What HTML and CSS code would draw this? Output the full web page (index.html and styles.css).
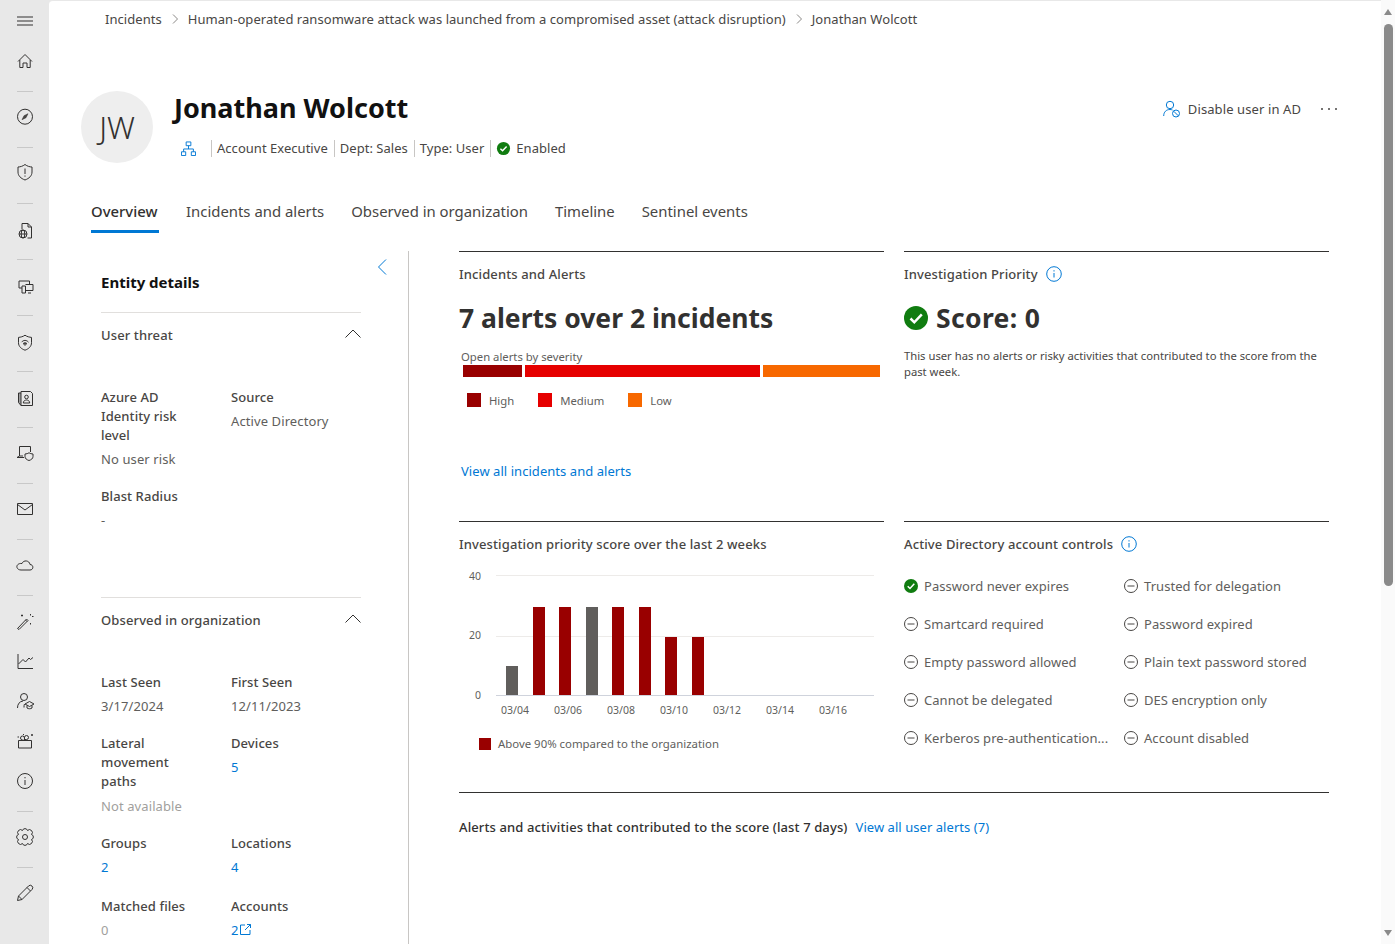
FILE: index.html
```html
<!DOCTYPE html>
<html lang="en">
<head>
<meta charset="utf-8">
<title>Jonathan Wolcott</title>
<link rel="stylesheet" href="styles.css">
</head>
<body>
<div class="app">
  <nav class="nav">
    <div class="nav-item nav-menu"><svg class="ico" viewBox="0 0 20 20"><path d="M2 6h16M2 10h16M2 14h16"/></svg></div>
    <div class="nav-item"><svg class="ico" viewBox="0 0 20 20"><path d="M3 10.500 10 3.500l7 7M4.800 9v7.500H8V12h4v4.500h3.200V9"/></svg></div>
    <div class="nav-rule"></div>
    <div class="nav-item"><svg class="ico" viewBox="0 .3 20 20"><circle cx="10" cy="10" r="7.500"/><path class="fill-dark" d="M13 7 11 11l-4 2 2-4z"/></svg></div>
    <div class="nav-rule"></div>
    <div class="nav-item"><svg class="ico" viewBox="0 1 20 20"><path d="M10 2.500c2.300 1.800 4.700 2.400 7 2.500v5c0 3.800-2.800 6.400-7 8-4.200-1.600-7-4.200-7-8V5c2.300-.1 4.700-.7 7-2.500zM10 6.500V12M10 13.500v1.200"/></svg></div>
    <div class="nav-rule"></div>
    <div class="nav-item"><svg class="ico" viewBox="0 -1.500 20 20"><path d="M7 9V3h6l3.500 3.500v11H12.500M13 3v3.500h3.500"/><circle cx="8" cy="13.500" r="4"/><ellipse cx="8" cy="13.500" rx="1.800" ry="4"/><path d="M4 13.500h8"/></svg></div>
    <div class="nav-rule"></div>
    <div class="nav-item"><svg class="ico" viewBox="0 -1.500 20 20"><path d="M7 11.500H4V4.500h10.500V8M10.500 8H18v6h-7.500M7 9.500h3.500v7H7zM13 16.500h3"/></svg></div>
    <div class="nav-rule"></div>
    <div class="nav-item"><svg class="ico" viewBox="0 -1.700 20 20"><path d="M10 2.500c2 1.500 4.500 2 6.500 2.200v5.300c0 3.700-2.800 6.200-6.500 7.500-3.700-1.300-6.500-3.800-6.500-7.500V4.700c2-.2 4.500-.7 6.500-2.200z"/><path d="M6.500 9.500c2-2.400 5-2.400 7 0M8 11c1.200-1.200 2.800-1.200 4 0"/><circle cx="10" cy="11.500" r="1"/></svg></div>
    <div class="nav-rule"></div>
    <div class="nav-item"><svg class="ico" viewBox="0 -1 20 20"><path class="fill-grey" d="M3.500 5H7v12.500H6l-2.500-3z"/><path class="fill-nav" d="M6 3.500h9.500l2 2v12H6z"/><circle cx="11.500" cy="9" r="1.800"/><path d="M8.300 15c0-4 6.400-4 6.400 0z"/></svg></div>
    <div class="nav-rule"></div>
    <div class="nav-item"><svg class="ico" viewBox="0 0 20 20"><path d="M4.500 13V3.500h11v5.500M2 14.500h7M2 14.500l2.500-1.500H8"/><path class="fill-nav" d="M10 11c1.500 0 3-.5 4-1.200 1 .7 2.500 1.200 4 1.200v2.500c0 2-1.700 3.300-4 4-2.300-.7-4-2-4-4z"/></svg></div>
    <div class="nav-rule"></div>
    <div class="nav-item"><svg class="ico" viewBox="0 0 20 20"><path d="M2.500 4.500h15v11h-15zM2.500 5.500 10 11l7.500-5.500"/></svg></div>
    <div class="nav-rule"></div>
    <div class="nav-item"><svg class="ico" viewBox="0 .5 20 20"><path d="M6 15.500h9c3.800 0 3.800-5.500 0-5.500-.6-4.300-6.600-4.800-8-1-3.700-.5-5.700 2-5 4 .5 1.500 2 2.500 4 2.500z"/></svg></div>
    <div class="nav-rule"></div>
    <div class="nav-item"><svg class="ico" viewBox="0 0 20 20"><path d="M2.500 17.500 11.500 8l1.500 1.500-9 9zM10.500 9l1.500 1.500M15.500 3v1.500M17 5.500h1.500M7 3.500v2M6 4.500h2M15.500 12v1.500"/></svg></div>
    <div class="nav-item"><svg class="ico" viewBox="0 0 20 20"><path d="M3 3v14.500h15M3.500 13 8 8.500l2.500 2.500 3.500-4 1.500 1.500L18 6.500"/></svg></div>
    <div class="nav-item"><svg class="ico" viewBox="0 0 20 20"><circle cx="9" cy="6" r="3.500"/><path d="M2.500 17c0-4 2-6.500 5.500-7M9 16.500c0-1.500 0-2.500.5-3.500M14.500 10.500 19 13l-4.500 2.500L10 13zM12 14.500V17c1.500 1 3.500 1 5 0v-2.500"/></svg></div>
    <div class="nav-item"><svg class="ico" viewBox="0 0 20 20"><path d="M3.500 9.500h13V17h-13zM2.500 6h1.500M8 3.500h1M17 3v2M16 4h2"/><path d="M9.500 9.500V6.500a2 2 0 1 1 2 2h-2M9.500 9.500V7a2 2 0 1 0-2 2z"/></svg></div>
    <div class="nav-item"><svg class="ico" viewBox="0 0 20 20"><circle cx="10" cy="10" r="7.500"/><path d="M10 9v5M10 6v1.300"/></svg></div>
    <div class="nav-rule"></div>
    <div class="nav-item"><svg class="ico" viewBox="0 0 20 20"><path d="M16.500 7.500A2.600 2.600 0 0 1 16.500 12.500 2.600 2.600 0 0 1 12.500 16.500 2.600 2.600 0 0 1 7.500 16.500 2.600 2.600 0 0 1 3.500 12.500 2.600 2.600 0 0 1 3.500 7.500 2.600 2.600 0 0 1 7.500 3.500 2.600 2.600 0 0 1 12.500 3.500 2.600 2.600 0 0 1 16.500 7.500z"/><circle cx="10" cy="10" r="2.500"/></svg></div>
    <div class="nav-rule"></div>
    <div class="nav-item"><svg class="ico" viewBox="0 0 20 20"><path d="M2.500 17.500 3.500 13 13.500 3a1.800 1.800 0 0 1 3.500 3.500L7 16.500zM3.500 13l3.500 3.500M12 4.500 15.500 8"/></svg></div>
  </nav>

  <main class="main">
    <div class="crumbs">
      <span>Incidents</span>
      <svg class="crumb-sep" viewBox="0 0 10 12"><path d="M3 1.500 7.500 6 3 10.500"/></svg>
      <span>Human-operated ransomware attack was launched from a compromised asset (attack disruption)</span>
      <svg class="crumb-sep" viewBox="0 0 10 12"><path d="M3 1.500 7.500 6 3 10.500"/></svg>
      <span>Jonathan Wolcott</span>
    </div>

    <header class="head">
      <div class="avatar">JW</div>
      <div class="head-info">
        <h1 class="title">Jonathan Wolcott</h1>
        <div class="meta">
          <svg class="org" viewBox="0 0 16 16"><path d="M5.500 1h5v4h-5zM.5 11.500h4.500v4H.5zM11 11.500h4.500v4H11zM8 5v3.500M2.800 11.500v-3h10.400v3"/></svg>
          <span class="meta-item">Account Executive</span>
          <span class="meta-item">Dept: Sales</span>
          <span class="meta-item">Type: User</span>
          <span class="meta-item meta-status">
            <svg class="check" viewBox="0 0 16 16"><circle cx="8" cy="8" r="7"/><path d="M4.700 8.300 7 10.500l4.300-4.700"/></svg>
            Enabled
          </span>
        </div>
      </div>
      <div class="actions">
        <svg class="act-ico" viewBox="0 0 18 18"><circle cx="7" cy="5" r="3.700"/><path d="M.7 16c0-4 2.500-6.500 6.300-6.500 1 0 1.700.2 2.500.5"/><circle cx="13" cy="13.500" r="3.500"/><path d="M10.700 11.200l4.600 4.600"/></svg>
        <span>Disable user in AD</span>
        <span class="dots"><i></i><i></i><i></i></span>
      </div>
    </header>

    <div class="tabs">
      <span class="tab tab-on">Overview</span>
      <span class="tab">Incidents and alerts</span>
      <span class="tab">Observed in organization</span>
      <span class="tab">Timeline</span>
      <span class="tab">Sentinel events</span>
    </div>

    <div class="body">
      <aside class="panel">
        <svg class="collapse" viewBox="0 0 10 16"><path d="M9 .5 1.500 8 9 15.500"/></svg>
        <h2 class="panel-title">Entity details</h2>
        <div class="acc">
          <span>User threat</span>
          <svg class="chev" viewBox="0 0 16 9"><path d="M.5 8.500 8 1l7.500 7.500"/></svg>
        </div>
        <div class="fields fields-threat">
          <div class="field"><div class="label">Azure AD Identity risk level</div><div class="value">No user risk</div></div>
          <div class="field"><div class="label">Source</div><div class="value">Active Directory</div></div>
          <div class="field"><div class="label">Blast Radius</div><div class="value">-</div></div>
        </div>
        <div class="acc">
          <span>Observed in organization</span>
          <svg class="chev" viewBox="0 0 16 9"><path d="M.5 8.500 8 1l7.500 7.500"/></svg>
        </div>
        <div class="fields">
          <div class="field"><div class="label">Last Seen</div><div class="value">3/17/2024</div></div>
          <div class="field"><div class="label">First Seen</div><div class="value">12/11/2023</div></div>
          <div class="field"><div class="label">Lateral movement paths</div><div class="value value-low muted">Not available</div></div>
          <div class="field"><div class="label">Devices</div><div class="value link">5</div></div>
          <div class="field field-tall"><div class="label">Groups</div><div class="value link">2</div></div>
          <div class="field field-tall"><div class="label">Locations</div><div class="value link">4</div></div>
          <div class="field"><div class="label">Matched files</div><div class="value muted">0</div></div>
          <div class="field"><div class="label">Accounts</div><div class="value link">2<svg class="ext" viewBox="0 0 11 11"><path d="M5 1H.5v9.500H10V6M5 6l5.500-5.500M7 .5h3.500V4"/></svg></div></div>
        </div>
      </aside>

      <section class="content">
        <div class="cards">
          <div class="card">
            <h3 class="card-title">Incidents and Alerts</h3>
            <div class="headline">7 alerts over 2 incidents</div>
            <div class="bar-caption">Open alerts by severity</div>
            <div class="sev-bar"><span class="sev sev-high"></span><span class="sev sev-med"></span><span class="sev sev-low"></span></div>
            <div class="sev-legend">
              <span class="leg"><i class="swatch bg-high"></i>High</span>
              <span class="leg"><i class="swatch bg-med"></i>Medium</span>
              <span class="leg"><i class="swatch bg-low"></i>Low</span>
            </div>
            <a class="view-link">View all incidents and alerts</a>
          </div>

          <div class="card">
            <h3 class="card-title">Investigation Priority <svg class="info" viewBox="0 0 16 16"><circle cx="8" cy="8" r="7.300"/><path d="M8 7v4.500M8 4.200v1.300"/></svg></h3>
            <div class="headline score">
              <svg class="score-ico" viewBox="0 0 24 24"><circle cx="12" cy="12" r="12"/><path d="M6.500 12.500l3.800 3.800 7.500-8"/></svg>
              Score: 0
            </div>
            <p class="score-text">This user has no alerts or risky activities that contributed to the score from the past week.</p>
          </div>

          <div class="card">
            <h3 class="card-title">Investigation priority score over the last 2 weeks</h3>
            <svg class="chart" viewBox="0 0 425 160">
              <g class="grid-lines"><path d="M37 10.500h378M37 71.500h378"/></g>
              <path class="base-line" d="M37 130.500h378"/>
              <g class="axis">
                <text x="22" y="15" text-anchor="end">40</text>
                <text x="22" y="74" text-anchor="end">20</text>
                <text x="22" y="134" text-anchor="end">0</text>
                <text x="56" y="149" text-anchor="middle">03/04</text>
                <text x="109" y="149" text-anchor="middle">03/06</text>
                <text x="162" y="149" text-anchor="middle">03/08</text>
                <text x="215" y="149" text-anchor="middle">03/10</text>
                <text x="268" y="149" text-anchor="middle">03/12</text>
                <text x="321" y="149" text-anchor="middle">03/14</text>
                <text x="374" y="149" text-anchor="middle">03/16</text>
              </g>
              <rect class="b-grey" x="47" y="101" width="12" height="29"/>
              <rect class="b-red" x="74" y="42" width="12" height="88"/>
              <rect class="b-red" x="100" y="42" width="12" height="88"/>
              <rect class="b-grey" x="127" y="42" width="12" height="88"/>
              <rect class="b-red" x="153" y="42" width="12" height="88"/>
              <rect class="b-red" x="180" y="42" width="12" height="88"/>
              <rect class="b-red" x="206" y="72" width="12" height="58"/>
              <rect class="b-red" x="233" y="72" width="12" height="58"/>
            </svg>
            <div class="chart-legend"><i class="chart-swatch"></i>Above 90% compared to the organization</div>
          </div>

          <div class="card">
            <h3 class="card-title">Active Directory account controls <svg class="info" viewBox="0 0 16 16"><circle cx="8" cy="8" r="7.300"/><path d="M8 7v4.500M8 4.200v1.300"/></svg></h3>
            <ul class="controls">
              <li class="ctl"><svg class="ctl-ico on" viewBox="0 0 14 14"><circle cx="7" cy="7" r="7"/><path d="M3.700 7.300 6 9.500l4.300-4.700"/></svg><span>Password never expires</span></li>
              <li class="ctl"><svg class="ctl-ico" viewBox="0 0 14 14"><circle cx="7" cy="7" r="6.500"/><path d="M3.500 7h7"/></svg><span>Trusted for delegation</span></li>
              <li class="ctl"><svg class="ctl-ico" viewBox="0 0 14 14"><circle cx="7" cy="7" r="6.500"/><path d="M3.500 7h7"/></svg><span>Smartcard required</span></li>
              <li class="ctl"><svg class="ctl-ico" viewBox="0 0 14 14"><circle cx="7" cy="7" r="6.500"/><path d="M3.500 7h7"/></svg><span>Password expired</span></li>
              <li class="ctl"><svg class="ctl-ico" viewBox="0 0 14 14"><circle cx="7" cy="7" r="6.500"/><path d="M3.500 7h7"/></svg><span>Empty password allowed</span></li>
              <li class="ctl"><svg class="ctl-ico" viewBox="0 0 14 14"><circle cx="7" cy="7" r="6.500"/><path d="M3.500 7h7"/></svg><span>Plain text password stored</span></li>
              <li class="ctl"><svg class="ctl-ico" viewBox="0 0 14 14"><circle cx="7" cy="7" r="6.500"/><path d="M3.500 7h7"/></svg><span>Cannot be delegated</span></li>
              <li class="ctl"><svg class="ctl-ico" viewBox="0 0 14 14"><circle cx="7" cy="7" r="6.500"/><path d="M3.500 7h7"/></svg><span>DES encryption only</span></li>
              <li class="ctl"><svg class="ctl-ico" viewBox="0 0 14 14"><circle cx="7" cy="7" r="6.500"/><path d="M3.500 7h7"/></svg><span>Kerberos pre-authentication...</span></li>
              <li class="ctl"><svg class="ctl-ico" viewBox="0 0 14 14"><circle cx="7" cy="7" r="6.500"/><path d="M3.500 7h7"/></svg><span>Account disabled</span></li>
            </ul>
          </div>
        </div>
        <div class="contrib">
          <h3 class="card-title contrib-title">Alerts and activities that contributed to the score (last 7 days)</h3>
          <a class="view-link contrib-link">View all user alerts (7)</a>
        </div>
      </section>
    </div>
  </main>

  <div class="scroll">
    <i class="arrow-up"></i>
    <div class="thumb"></div>
    <i class="arrow-down"></i>
  </div>
</div>
</body>
</html>
```

FILE: styles.css
```css
* { box-sizing: border-box; }
html, body { margin: 0; height: 100%; overflow: hidden; }
body {
  font-family: "Noto Sans", "Open Sans", "Liberation Sans", sans-serif;
  font-size: 13px;
  color: #323130;
  background: #e8e8e8;
}
h1, h2, h3, p, ul { margin: 0; padding: 0; }
.app { display: flex; height: 944px; width: 1395px; }

/* left rail */
.nav {
  width: 49px;
  flex: none;
  display: flex;
  flex-direction: column;
  align-items: center;
  background: #e8e8e8;
  border-bottom-left-radius: 6px;
}
.nav-item { height: 40px; width: 49px; flex: none; display: flex; align-items: center; justify-content: center; }
.nav-menu { height: 41px; }
.nav-rule { width: 16px; height: 1px; background: #c8c8c8; margin: 10px 0 5px; flex: none; }
.ico { width: 20px; height: 20px; fill: none; stroke: #323130; stroke-width: 1; }
.fill-grey { fill: #a0a0a0; }
.fill-nav { fill: #e8e8e8; }
.fill-dark { fill: #484644; stroke-width: .5; }

/* main */
.main {
  flex: 1;
  min-width: 0;
  background: #fff;
  border-top: 1px solid #e8e8e8;
  border-top-left-radius: 4px;
  overflow: hidden;
}
.crumbs { height: 36px; margin-left: 56px; display: flex; align-items: center; gap: 8px; font-size: 13px; letter-spacing: .05px; color: #484644; }
.crumb-sep { width: 10px; height: 12px; fill: none; stroke: #8a8886; stroke-width: 1; }

.head { display: flex; margin: 54px 44px 0 32px; height: 72px; }
.avatar {
  width: 72px; height: 72px; border-radius: 50%; flex: none;
  background: #eeeeee; color: #323130;
  display: flex; align-items: center; justify-content: center;
  font-size: 31px; font-weight: 300;
}
.head-info { margin-left: 20px; }
.title { font-size: 27px; line-height: 34px; font-weight: 700; color: #111; margin-left: 1px; }
.meta { display: flex; align-items: center; height: 20px; margin-top: 13px; color: #484644; font-size: 13px; letter-spacing: .03px; }
.org { width: 15px; height: 15px; margin: 0 15px 0 8px; fill: none; stroke: #0078d4; stroke-width: 1; }
.meta-item { border-left: 1px solid #c8c6c4; padding: 0 5px; margin-right: 1px; line-height: 17px; }
.meta-status { display: flex; align-items: center; gap: 5px; }
.check { width: 15px; height: 15px; }
.check circle, .ctl-ico.on circle { fill: #107c10; stroke: none; }
.check path, .ctl-ico.on path { fill: none; stroke: #fff; stroke-width: 1.5; }
.actions { margin-left: auto; display: flex; align-items: center; height: 36px; color: #484644; letter-spacing: .1px; }
.act-ico { width: 18px; height: 18px; margin-right: 7px; fill: none; stroke: #0078d4; stroke-width: 1; }
.dots { display: flex; gap: 5px; margin: 0 0 1px 20px; width: 16px; }
.dots i { width: 2px; height: 2px; background: #484644; border-radius: 50%; flex: none; }

.tabs { display: flex; gap: 27px; margin: 27px 0 0 42px; height: 43px; font-size: 14.900px; color: #484644; }
.tab { padding-top: 9px; line-height: 24px; }
.tab-on { width: 68px; border-bottom: 3px solid #0078d4; font-weight: 500; color: #323130; white-space: nowrap; }

.body { display: flex; margin-top: 18px; }

/* left panel */
.panel { position: relative; width: 308px; margin-left: 52px; height: 700px; padding-right: 47px; border-right: 1px solid #c8c6c4; flex: none; }
.collapse { position: absolute; left: 276px; top: 8px; width: 10px; height: 16px; fill: none; stroke: #0078d4; stroke-width: 1; }
.panel-title { font-size: 15px; line-height: 20px; font-weight: 700; color: #111; padding-top: 21px; height: 61px; }
.acc {
  height: 45px; border-top: 1px solid #e1dfdd; display: flex; align-items: center; justify-content: space-between;
  font-weight: 500; letter-spacing: .12px; color: #484644;
}
.chev { width: 16px; height: 9px; fill: none; stroke: #323130; stroke-width: 1; margin-bottom: 3px; }
.fields { display: grid; grid-template-columns: 130px 130px; row-gap: 18px; margin-top: 31px; align-items: start; }
.fields-threat { height: 209px; align-content: start; }
.field { padding-right: 30px; }
.field-tall { padding-bottom: 2px; }
.label { line-height: 19px; font-weight: 500; letter-spacing: .08px; color: #484644; }
.value { line-height: 19px; margin-top: 5px; letter-spacing: .1px; color: #605e5c; white-space: nowrap; }
.value-low { margin-top: 6px; }
.muted { color: #a19f9d; }
.link { color: #0078d4; }
.ext { width: 11px; height: 11px; margin-left: 1px; fill: none; stroke: #0078d4; stroke-width: 1; }

/* content */
.content { margin-left: 50px; width: 870px; flex: none; }
.cards { display: grid; grid-template-columns: 425px 425px; column-gap: 20px; grid-template-rows: 270px 271px; }
.card { border-top: 1px solid #323130; padding-top: 12px; }
.card-title { font-size: 13px; line-height: 20px; font-weight: 500; letter-spacing: .12px; color: #484644; display: flex; align-items: center; gap: 8px; }
.headline { font-size: 26.500px; line-height: 36px; font-weight: 700; color: #323130; margin-top: 16px; }
.score { display: flex; align-items: center; gap: 8px; letter-spacing: .35px; }
.score-ico { width: 24px; height: 24px; flex: none; }
.score-ico circle { fill: #107c10; }
.score-ico path { fill: none; stroke: #fff; stroke-width: 2.500; }
.score-text { font-size: 11.250px; line-height: 16px; margin-top: 12px; color: #484644; }
.bar-caption { font-size: 11.300px; line-height: 16px; margin: 13px 0 0 2px; color: #605e5c; }
.sev-bar { display: flex; gap: 3px; height: 12px; margin-left: 4px; width: 417px; }
.sev-high { width: 59px; background: #990000; }
.sev-med { width: 235px; background: #e60000; }
.sev-low { width: 117px; background: #f76800; }
.sev-legend { display: flex; margin: 16px 0 0 8px; height: 14px; font-size: 11.300px; color: #605e5c; }
.leg { display: flex; align-items: center; gap: 8px; margin-right: 24px; }
.swatch { width: 14px; height: 14px; display: block; }
.bg-high { background: #990000; }
.bg-med { background: #e60000; }
.bg-low { background: #f76800; }
.view-link { display: block; color: #0078d4; font-size: 13px; line-height: 18px; letter-spacing: .05px; margin: 55px 0 0 2px; }
.info { width: 16px; height: 16px; fill: none; stroke: #0078d4; stroke-width: 1; }

.chart { display: block; width: 425px; height: 160px; margin-top: 11px; }
.grid-lines path { stroke: #edebe9; fill: none; }
.base-line { stroke: #cfd3dc; fill: none; }
.axis text { font-family: "Noto Sans", sans-serif; font-size: 10.500px; fill: #605e5c; }
.b-red { fill: #990000; }
.b-grey { fill: #605e5c; }
.chart-legend { display: flex; align-items: center; gap: 7px; margin: 12px 0 0 20px; font-size: 11.400px; line-height: 14px; color: #605e5c; }
.chart-swatch { width: 12px; height: 12px; background: #990000; display: block; }

.controls { list-style: none; display: grid; grid-template-columns: 220px 205px; grid-auto-rows: 38px; margin-top: 13px; }
.ctl { display: flex; align-items: center; gap: 6px; color: #605e5c; letter-spacing: .05px; white-space: nowrap; }
.ctl-ico { width: 14px; height: 14px; flex: none; fill: none; stroke: #484644; stroke-width: 1; }

.contrib { border-top: 1px solid #323130; display: flex; align-items: center; padding-top: 24px; }
.contrib-title { color: #323130; }
.contrib-link { margin: 0 0 0 8px; line-height: 20px; }

/* scrollbar */
.scroll { width: 14px; flex: none; background: #fafafa; display: flex; flex-direction: column; align-items: center; }
.arrow-up { width: 0; height: 0; margin-top: 9px; border: 4.500px solid transparent; border-top: 0; border-bottom: 6px solid #8a8a8a; flex: none; }
.thumb { width: 9px; height: 562px; margin-top: 9px; background: #8a8a8a; border-radius: 5px; flex: none; }
.arrow-down { width: 0; height: 0; margin-top: auto; margin-bottom: 8px; border: 4.500px solid transparent; border-bottom: 0; border-top: 6px solid #8a8a8a; flex: none; }
```
